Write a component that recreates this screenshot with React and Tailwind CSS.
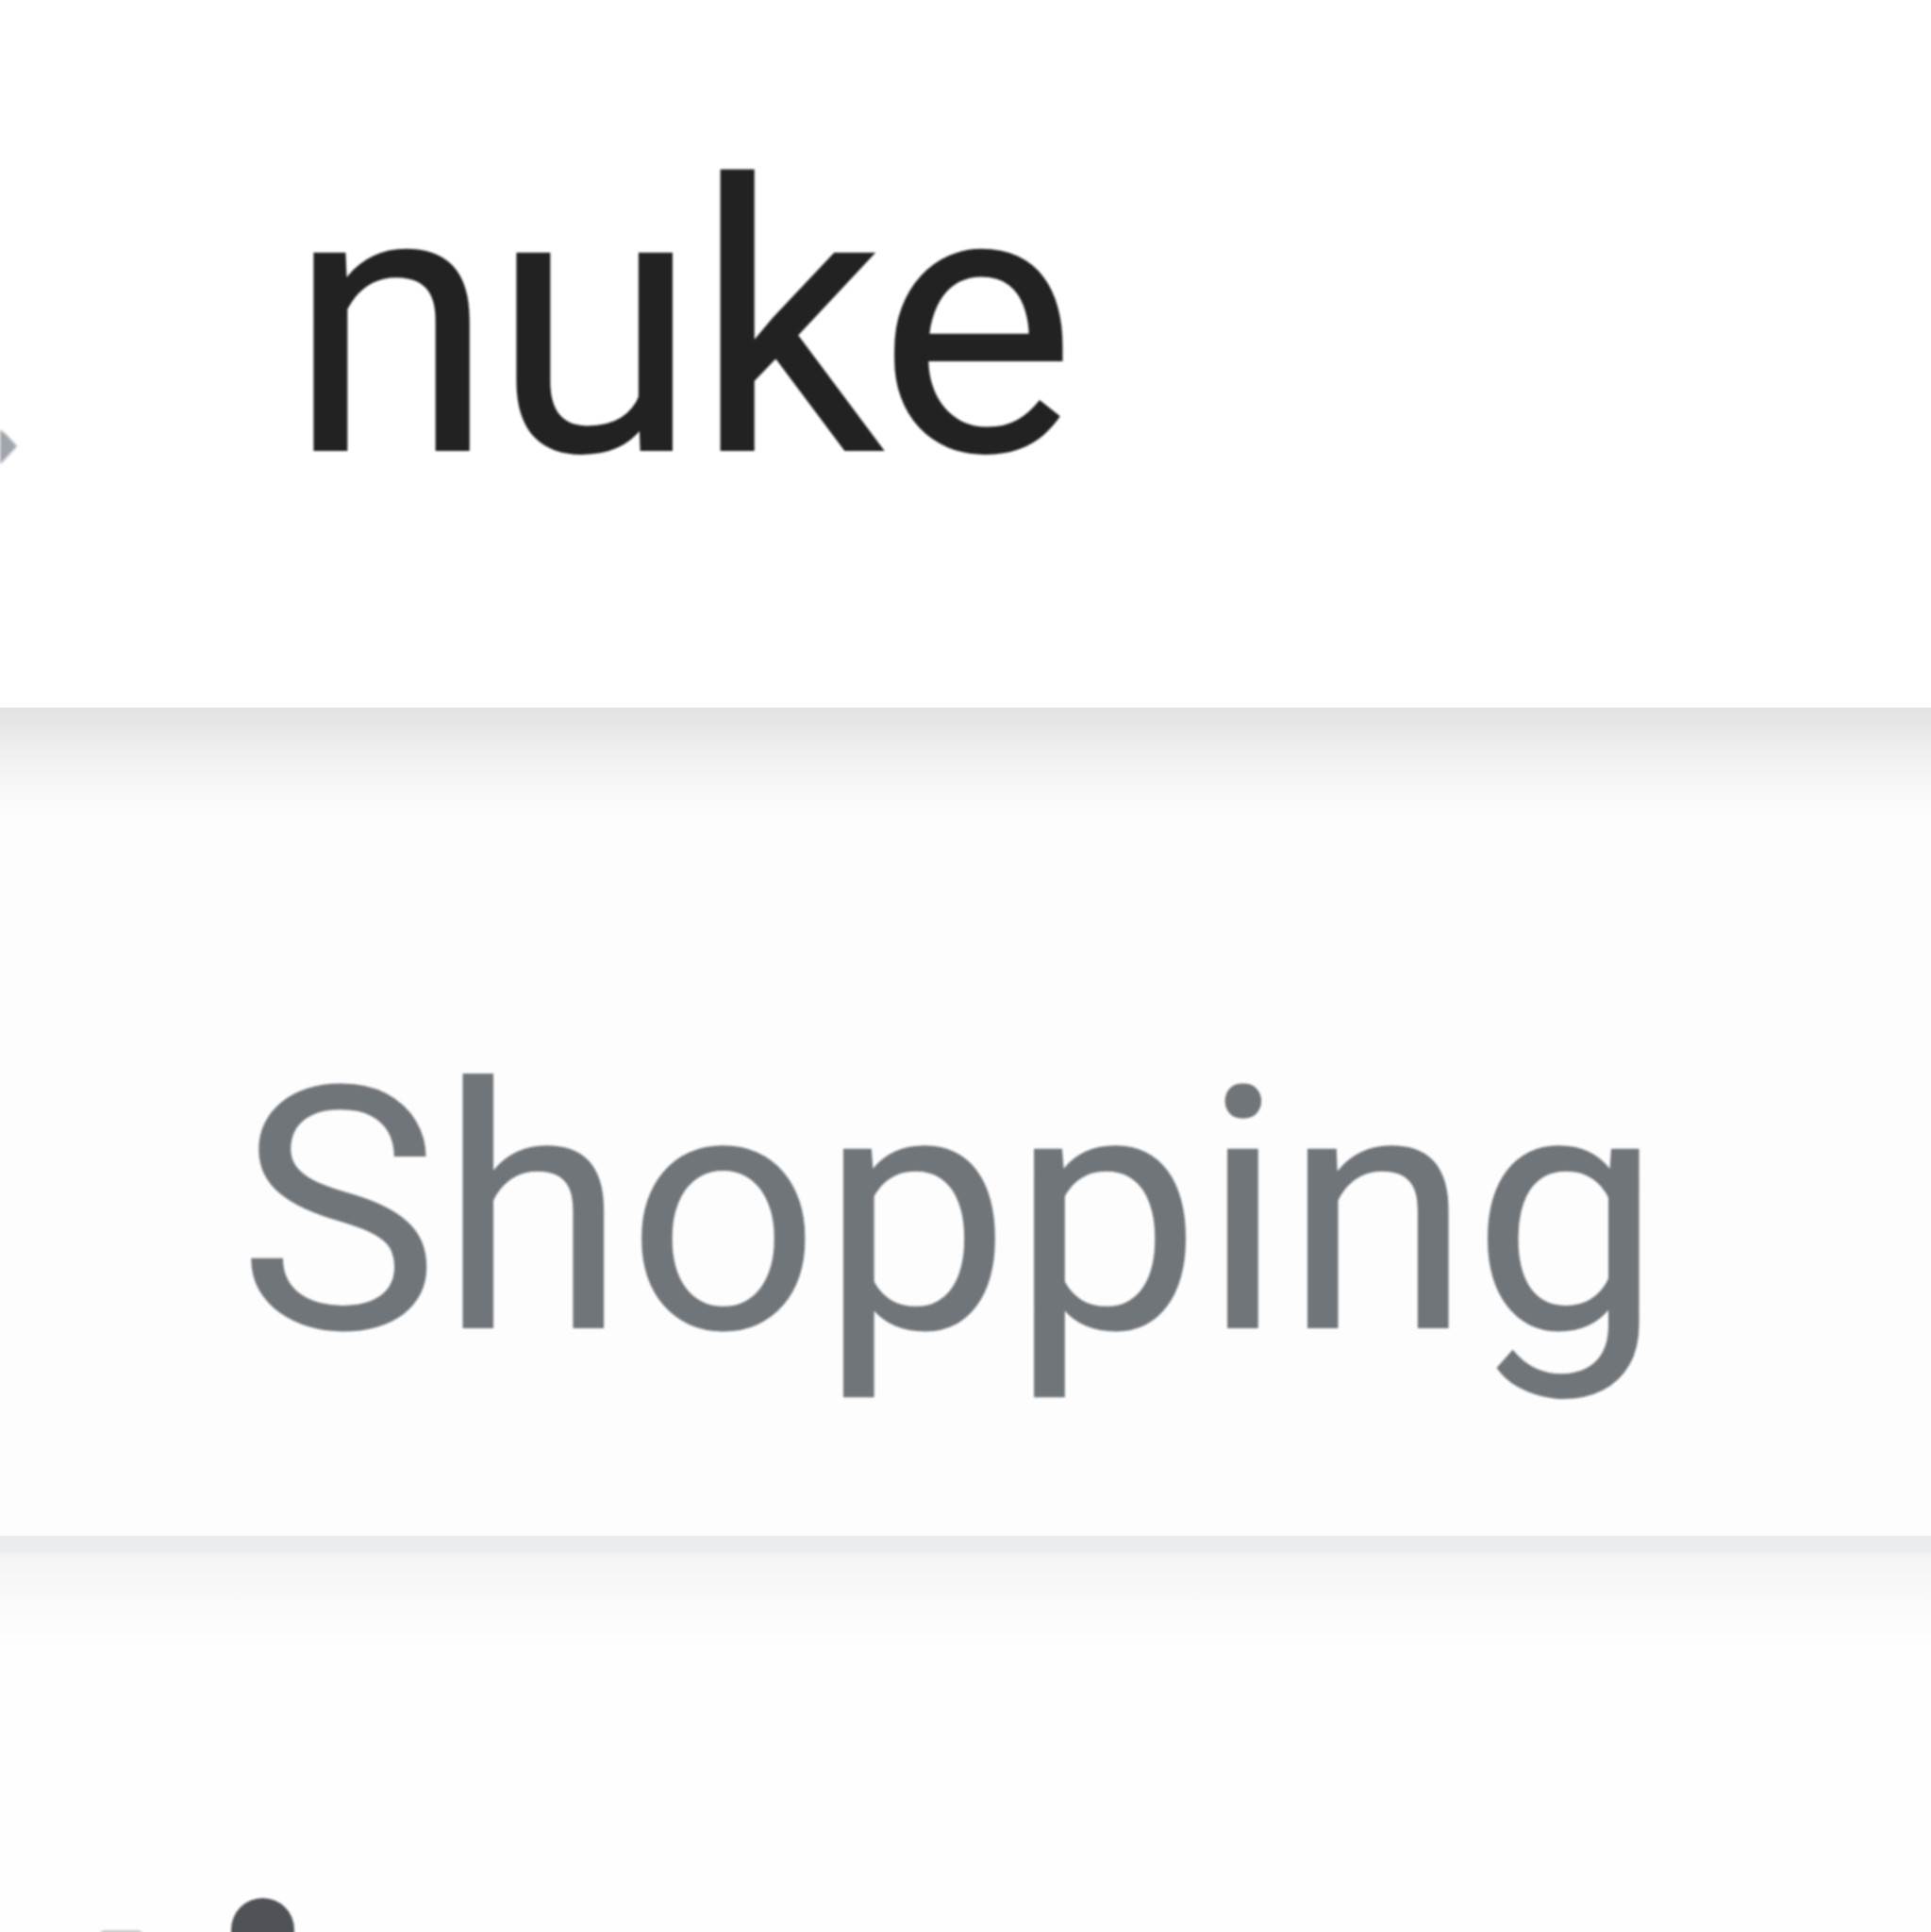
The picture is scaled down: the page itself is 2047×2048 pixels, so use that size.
export default function App() {
  return (
    <div className="w-[2047px] h-[2048px] overflow-hidden bg-white flex flex-col">
      {/* search input area */}
      <div className="h-[750px] shrink-0 bg-white flex items-start">
        <svg
          className="shrink-0 mt-[448px] blur-[1.5px]"
          width="20"
          height="54"
          viewBox="0 0 20 54"
        >
          <polygon points="-10,0 6,12 18,25 6,38 -10,54" fill="#8f959c" opacity="0.85" />
        </svg>
        <div
          className="ml-[285px] mt-[143px] text-[#222222] text-[398px] leading-[398px] tracking-[-4px] blur-[1px]"
          style={{ fontFamily: "Roboto, 'Liberation Sans', sans-serif" }}
        >
          nuke
        </div>
      </div>

      {/* header shadow */}
      <div className="h-[118px] shrink-0 bg-[linear-gradient(to_bottom,#e4e4e4_0px,#e5e5e5_14px,#f0f0f0_50px,#fbfbfb_105px,#fdfdfd_118px)]" />

      {/* tabs row */}
      <div className="h-[760px] shrink-0 bg-[#fdfdfd] flex items-start">
        <div
          className="ml-[252px] mt-[237px] text-[#70757a] text-[360px] leading-[360px] blur-[1px]"
          style={{ fontFamily: "Roboto, 'Liberation Sans', sans-serif" }}
        >
          Shopping
        </div>
      </div>

      {/* tabs shadow */}
      <div className="h-[120px] shrink-0 bg-[linear-gradient(to_bottom,#ebecee_0px,#ebecee_16px,#f4f4f4_22px,#f9f9f9_60px,#fdfdfd_110px,#fefefe_120px)]" />

      {/* results area */}
      <div className="flex-1 bg-[#fefefe] flex items-start pt-[264px]">
        <div className="ml-[105px] mt-[34px] w-[47px] h-[20px] rounded-t-[6px] bg-[#c9cbce] blur-[1px]" />
        <div className="ml-[93px] w-[67px] h-[67px] rounded-full bg-[#4f5358] blur-[1px]" />
      </div>
    </div>
  );
}
